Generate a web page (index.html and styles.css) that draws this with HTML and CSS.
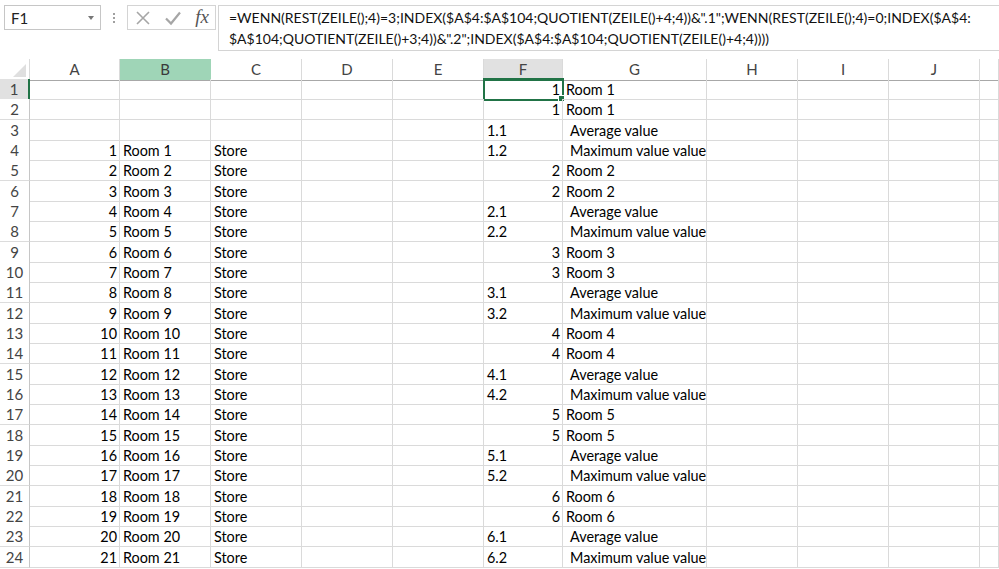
FILE: index.html
```html
<!DOCTYPE html>
<html>
<head>
<meta charset="utf-8">
<link rel="stylesheet" href="styles.css">
</head>
<body>
<div class="toolbar">
  <div class="namebox"><span class="nb-text">F1</span><span class="nb-arrow"></span></div>
  <div class="dots"><i></i><i></i><i></i></div>
  <div class="btns">
    <svg class="ico" width="16" height="16" viewBox="0 0 16 16"><path d="M2 2 L14 14 M14 2 L2 14" stroke="#a6a6a6" stroke-width="1.6" fill="none"/></svg>
    <svg class="ico" width="18" height="16" viewBox="0 0 18 16"><path d="M2 8.5 L7 13.5 L16 2.5" stroke="#a6a6a6" stroke-width="2.2" fill="none"/></svg>
    <span class="fx">fx</span>
  </div>
  <div class="formula">=WENN(REST(ZEILE();4)=3;INDEX($A$4:$A$104;QUOTIENT(ZEILE()+4;4))&amp;".1";WENN(REST(ZEILE();4)=0;INDEX($A$4:<br>$A$104;QUOTIENT(ZEILE()+3;4))&amp;".2";INDEX($A$4:$A$104;QUOTIENT(ZEILE()+4;4))))</div>
</div>
<div class="sheet">
  <div class="row head"><span class="corner"></span><span>A</span><span class="bsel">B</span><span>C</span><span>D</span><span>E</span><span class="fsel">F</span><span>G</span><span>H</span><span>I</span><span>J</span><span></span></div>
  <div class="row"><span class="h hsel">1</span><span></span><span></span><span></span><span></span><span></span><span class="n active">1</span><span>Room 1</span><span></span><span></span><span></span><span></span></div>
  <div class="row"><span class="h">2</span><span></span><span></span><span></span><span></span><span></span><span class="n">1</span><span>Room 1</span><span></span><span></span><span></span><span></span></div>
  <div class="row"><span class="h">3</span><span></span><span></span><span></span><span></span><span></span><span>1.1</span><span class="ind">Average value</span><span></span><span></span><span></span><span></span></div>
  <div class="row"><span class="h">4</span><span class="n">1</span><span>Room 1</span><span>Store</span><span></span><span></span><span>1.2</span><span class="ind">Maximum value value</span><span></span><span></span><span></span><span></span></div>
  <div class="row"><span class="h">5</span><span class="n">2</span><span>Room 2</span><span>Store</span><span></span><span></span><span class="n">2</span><span>Room 2</span><span></span><span></span><span></span><span></span></div>
  <div class="row"><span class="h">6</span><span class="n">3</span><span>Room 3</span><span>Store</span><span></span><span></span><span class="n">2</span><span>Room 2</span><span></span><span></span><span></span><span></span></div>
  <div class="row"><span class="h">7</span><span class="n">4</span><span>Room 4</span><span>Store</span><span></span><span></span><span>2.1</span><span class="ind">Average value</span><span></span><span></span><span></span><span></span></div>
  <div class="row"><span class="h">8</span><span class="n">5</span><span>Room 5</span><span>Store</span><span></span><span></span><span>2.2</span><span class="ind">Maximum value value</span><span></span><span></span><span></span><span></span></div>
  <div class="row"><span class="h">9</span><span class="n">6</span><span>Room 6</span><span>Store</span><span></span><span></span><span class="n">3</span><span>Room 3</span><span></span><span></span><span></span><span></span></div>
  <div class="row"><span class="h">10</span><span class="n">7</span><span>Room 7</span><span>Store</span><span></span><span></span><span class="n">3</span><span>Room 3</span><span></span><span></span><span></span><span></span></div>
  <div class="row"><span class="h">11</span><span class="n">8</span><span>Room 8</span><span>Store</span><span></span><span></span><span>3.1</span><span class="ind">Average value</span><span></span><span></span><span></span><span></span></div>
  <div class="row"><span class="h">12</span><span class="n">9</span><span>Room 9</span><span>Store</span><span></span><span></span><span>3.2</span><span class="ind">Maximum value value</span><span></span><span></span><span></span><span></span></div>
  <div class="row"><span class="h">13</span><span class="n">10</span><span>Room 10</span><span>Store</span><span></span><span></span><span class="n">4</span><span>Room 4</span><span></span><span></span><span></span><span></span></div>
  <div class="row"><span class="h">14</span><span class="n">11</span><span>Room 11</span><span>Store</span><span></span><span></span><span class="n">4</span><span>Room 4</span><span></span><span></span><span></span><span></span></div>
  <div class="row"><span class="h">15</span><span class="n">12</span><span>Room 12</span><span>Store</span><span></span><span></span><span>4.1</span><span class="ind">Average value</span><span></span><span></span><span></span><span></span></div>
  <div class="row"><span class="h">16</span><span class="n">13</span><span>Room 13</span><span>Store</span><span></span><span></span><span>4.2</span><span class="ind">Maximum value value</span><span></span><span></span><span></span><span></span></div>
  <div class="row"><span class="h">17</span><span class="n">14</span><span>Room 14</span><span>Store</span><span></span><span></span><span class="n">5</span><span>Room 5</span><span></span><span></span><span></span><span></span></div>
  <div class="row"><span class="h">18</span><span class="n">15</span><span>Room 15</span><span>Store</span><span></span><span></span><span class="n">5</span><span>Room 5</span><span></span><span></span><span></span><span></span></div>
  <div class="row"><span class="h">19</span><span class="n">16</span><span>Room 16</span><span>Store</span><span></span><span></span><span>5.1</span><span class="ind">Average value</span><span></span><span></span><span></span><span></span></div>
  <div class="row"><span class="h">20</span><span class="n">17</span><span>Room 17</span><span>Store</span><span></span><span></span><span>5.2</span><span class="ind">Maximum value value</span><span></span><span></span><span></span><span></span></div>
  <div class="row"><span class="h">21</span><span class="n">18</span><span>Room 18</span><span>Store</span><span></span><span></span><span class="n">6</span><span>Room 6</span><span></span><span></span><span></span><span></span></div>
  <div class="row"><span class="h">22</span><span class="n">19</span><span>Room 19</span><span>Store</span><span></span><span></span><span class="n">6</span><span>Room 6</span><span></span><span></span><span></span><span></span></div>
  <div class="row"><span class="h">23</span><span class="n">20</span><span>Room 20</span><span>Store</span><span></span><span></span><span>6.1</span><span class="ind">Average value</span><span></span><span></span><span></span><span></span></div>
  <div class="row"><span class="h">24</span><span class="n">21</span><span>Room 21</span><span>Store</span><span></span><span></span><span>6.2</span><span class="ind">Maximum value value</span><span></span><span></span><span></span><span></span></div>
</div>
</body>
</html>
```
FILE: styles.css
```css
* { box-sizing: border-box; }
html, body {
  margin: 0;
  padding: 0;
  background: #fff;
  width: 999px;
  height: 569px;
  overflow: hidden;
  font-family: Lato, "Liberation Sans", sans-serif;
  color: #000;
}
.toolbar {
  height: 59px;
  display: flex;
  align-items: flex-start;
  padding: 5px 0 0 4px;
}
.namebox {
  flex: 0 0 97px;
  height: 25px;
  border: 1px solid #c6c6c6;
  display: flex;
  align-items: center;
  justify-content: space-between;
  padding: 0 6px 0 6px;
  font-size: 15px;
  color: #222;
}
.nb-arrow {
  width: 0; height: 0;
  border-left: 3px solid transparent;
  border-right: 3px solid transparent;
  border-top: 4px solid #777;
}
.dots {
  flex: 0 0 26px;
  height: 25px;
  display: flex;
  flex-direction: column;
  align-items: center;
  justify-content: center;
  gap: 2px;
}
.dots i {
  display: block;
  width: 2px; height: 2px;
  background: #a0a0a0;
}
.btns {
  flex: 0 0 89px;
  height: 25px;
  border: 1px solid #d4d4d4;
  display: flex;
  align-items: center;
  justify-content: space-between;
  padding: 0 6px 0 7px;
}
.fx {
  font-family: "Liberation Serif", serif;
  font-style: italic;
  font-size: 19px;
  color: #555;
  line-height: 1;
  margin-top: -3px;
}
.formula {
  margin-left: 2px;
  flex: 1 1 auto;
  min-width: 0;
  overflow: hidden;
  height: 46px;
  border: 1px solid #d4d4d4;
  border-right: none;
  padding: 1px 0 0 10px;
  font-size: 14px;
  line-height: 21px;
  white-space: nowrap;
  color: #111;
}
.sheet {
  display: flex;
  flex-direction: column;
}
.row {
  display: grid;
  grid-template-columns: 30px 90px 91px 91px 91px 91px 79px 144px 91px 91px 91px 19px;
  height: 20.33px;
  font-size: 14.4px;
}
.row > span {
  border-right: 1px solid #dadada;
  border-bottom: 1px solid #dadada;
  padding: 1px 3px 0 3px;
  line-height: 19px;
  white-space: nowrap;
  overflow: visible;
  position: relative;
}
.row > span.n { text-align: right; padding-right: 2px; }
.row > span.ind { padding-left: 7px; }
.row > span.h {
  text-align: center;
  color: #444;
  background: #fff;
  font-size: 15px;
  border-right: 1px solid #c6c6c6;
  border-bottom: 1px solid #dcdcdc;
}
.row > span.hsel {
  background: #e1e1e1;
  border-right: 2px solid #217346;
}
.head { height: 20px; }
.head > span {
  text-align: center;
  color: #444;
  background: #fff;
  font-size: 15px;
  padding-top: 0;
  border-right: 1px solid #dadada;
  border-bottom: 1px solid #a8a8a8;
  line-height: 20px;
}
.head > span.bsel { background: #9fd5b7; color: #3a3a3a; border-right-color: #9fd5b7; }
.head > span.fsel { background: #e1e1e1; border-bottom: 2px solid #217346; }
.corner {
  position: relative;
}
.corner::after {
  content: "";
  position: absolute;
  right: 3px;
  bottom: 3px;
  width: 0; height: 0;
  border-left: 13px solid transparent;
  border-bottom: 13px solid #dfdfdf;
}
.row > span.active {
  outline: 2px solid #217346;
  outline-offset: -1px;
}
.row > span.active::after {
  content: "";
  position: absolute;
  right: -3px;
  bottom: -3px;
  width: 5px;
  height: 5px;
  background: #217346;
  border: 1px solid #fff;
}
```
